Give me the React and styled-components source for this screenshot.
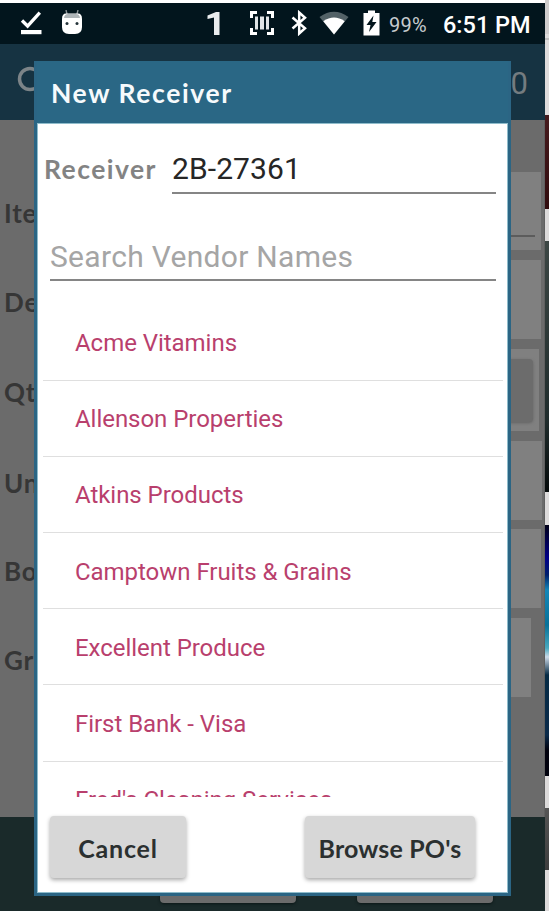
import React, { useState } from "react";
import styled, { createGlobalStyle } from "styled-components";

const vendors = [
  "Acme Vitamins",
  "Allenson Properties",
  "Atkins Products",
  "Camptown Fruits & Grains",
  "Excellent Produce",
  "First Bank - Visa",
  "Fred's Cleaning Services"
];

const fields = [
  { label: "Item", height: 78, gap: 10, right: 3, line: true },
  { label: "Desc", height: 79, gap: 10, right: 3 },
  { label: "Qty", height: 82, gap: 10, right: 5, button: true },
  { label: "Unit", height: 79, gap: 9, right: 2 },
  { label: "Box", height: 79, gap: 10, right: 3 },
  { label: "Group", height: 79, gap: 0, right: 13 }
];

const StatusIcons = () => (
  <StatusBar>
    <Icon width="22" height="26" viewBox="0 0 22 26" $left={20}>
      <path d="M2 10.5 L7.6 16 L19.8 2.6" fill="none" stroke="#fff" strokeWidth="3.3" />
      <path d="M1 20h20.5v4.2H1z" fill="#fff" />
    </Icon>
    <Icon width="22" height="26" viewBox="0 0 22 26" $left={18.5}>
      <path d="M5 0l1.200 5M17 0l-1.200 5" stroke="#8b9497" strokeWidth="1.4" />
      <path d="M1 9Q1 3.500 5 3.500h12q4 0 4 5.500v8q0 7-7 7h-6Q1 24 1 17z" fill="#fff" />
      <path d="M3 8Q3.400 4 7 4h8q3.600 0 4 4z" fill="#aeb5b8" />
      <circle cx="6" cy="13.500" r="1.500" fill="#26343a" />
      <circle cx="16" cy="13.500" r="1.500" fill="#26343a" />
    </Icon>
    <Icon width="16" height="25" viewBox="0 0 16 25" $left={123}>
      <path d="M8 24V6.500L1.500 8V4.500L10 1h3.500v23z" fill="#e9ecee" />
    </Icon>
    <Icon width="26" height="26" viewBox="0 0 26 26" $left={27.5}>
      <path
        d="M2.500 8V2.500H8M18 2.500h5.500V8M23.500 18v5.500H18M8 23.500H2.500V18"
        fill="none"
        stroke="#fff"
        strokeWidth="3"
      />
      <path d="M6 6.500h3v13H6zM11 6.500h4v13h-4zM17 6.500h3v13h-3z" fill="#e1e5e7" />
    </Icon>
    <Icon width="17" height="26" viewBox="0 0 17 26" $left={16}>
      <path
        d="M1.500 7.500L14 18.300L8.200 23.500V2.500L14 7.700L1.500 18.500"
        fill="none"
        stroke="#fff"
        strokeWidth="2.500"
      />
    </Icon>
    <Icon width="30" height="24" viewBox="0 0 30 24" $left={10.5}>
      <path d="M0.500 6Q15-4.500 29.500 6L15 23.500z" fill="#536267" />
      <path d="M4.300 10.300Q15 2.800 25.700 10.300L15 23.500z" fill="#fff" />
    </Icon>
    <Icon width="17" height="26" viewBox="0 0 17 26" $left={14.5}>
      <path d="M.5 3H5V.5h7V3h4.500v22.500H.5z" fill="#fff" />
      <path d="M10.500 5.500L3.500 15h4L6 22l7.500-10h-4.200z" fill="#03151c" />
    </Icon>
    <Percent>99%</Percent>
    <Clock>6:51 PM</Clock>
  </StatusBar>
);

const App = () => {
  const [receiver, setReceiver] = useState("2B-27361");
  const [search, setSearch] = useState("");

  return (
    <Page>
      <GlobalStyle />
      <Screen>
        <StatusIcons />
        <AppBar>
          <Ring width="30" height="30" viewBox="0 0 30 30">
            <circle cx="13" cy="13" r="10.500" fill="none" stroke="#7c8488" strokeWidth="3.500" />
          </Ring>
          <Count>0</Count>
        </AppBar>
        <Form>
          {fields.map((field) => (
            <Field key={field.label} $height={field.height} $gap={field.gap}>
              <FieldLabel>{field.label}</FieldLabel>
              <FieldBox $right={field.right}>
                {field.line && <FieldLine />}
                {field.button && <FieldButton />}
              </FieldBox>
            </Field>
          ))}
        </Form>
        <Footer>
          <FooterButton />
          <FooterButton />
        </Footer>
      </Screen>
      <Edge />

      <Dialog>
        <Title>New Receiver</Title>
        <Body>
          <ReceiverRow>
            <Label>Receiver</Label>
            <ReceiverInput value={receiver} onChange={(e) => setReceiver(e.target.value)} />
          </ReceiverRow>
          <SearchInput
            placeholder="Search Vendor Names"
            value={search}
            onChange={(e) => setSearch(e.target.value)}
          />
          <List>
            {vendors
              .filter((name) => name.toLowerCase().includes(search.toLowerCase()))
              .map((name) => (
                <Vendor key={name}>{name}</Vendor>
              ))}
          </List>
          <Actions>
            <Button $width={136} $spacing={0.8}>Cancel</Button>
            <Button $width={170} $spacing={0.15}>Browse PO's</Button>
          </Actions>
        </Body>
      </Dialog>
    </Page>
  );
};

export default App;

const GlobalStyle = createGlobalStyle`
  * {
    box-sizing: border-box;
  }

  body {
    margin: 0;
    background: #fff;
    overflow: hidden;
  }
`;

const Page = styled.div`
  position: relative;
  display: flex;
  width: 549px;
  height: 911px;
  overflow: hidden;
  font-family: Roboto, "Liberation Sans", sans-serif;
`;

const Screen = styled.div`
  display: flex;
  flex-direction: column;
  width: 545px;
  padding-top: 3px;
`;

const StatusBar = styled.div`
  display: flex;
  align-items: center;
  height: 41px;
  padding-bottom: 1px;
  background-color: #02151d;
  color: #fff;
`;

const Icon = styled.svg`
  flex-shrink: 0;
  margin-left: ${({ $left }) => $left}px;
`;

const Percent = styled.span`
  margin: 3px 0 0 9px;
  width: 39px;
  font-size: 20px;
  letter-spacing: 0.2px;
  color: #c6cbce;
`;

const Clock = styled.span`
  margin: 3px 0 0 15px;
  font-size: 23.5px;
  font-weight: 500;
  white-space: nowrap;
`;

const AppBar = styled.div`
  display: flex;
  justify-content: space-between;
  align-items: center;
  height: 76px;
  padding: 0 17px 0 17px;
  background-color: #163342;
`;

const Ring = styled.svg`
  margin-bottom: 2px;
`;

const Count = styled.span`
  margin-top: 3px;
  font-size: 31px;
  color: #747c80;
`;

const Form = styled.div`
  height: 697px;
  padding-top: 52px;
  background-color: #6b6b6b;
  border-right: 1px solid #606060;
`;

const Field = styled.div`
  display: flex;
  height: ${({ $height }) => $height}px;
  margin-bottom: ${({ $gap }) => $gap}px;
`;

const FieldLabel = styled.div`
  display: flex;
  align-items: center;
  width: 120px;
  padding: 4px 0 0 4px;
  font-family: Lato, sans-serif;
  font-size: 26px;
  font-weight: bold;
  letter-spacing: 0.8px;
  color: #363636;
`;

const FieldBox = styled.div`
  flex: 1;
  margin-right: ${({ $right }) => $right}px;
  padding: 10px 6px;
  background-color: #808080;
`;

const FieldLine = styled.div`
  height: 55px;
  border-bottom: 2px solid #5c5c5c;
`;

const FieldButton = styled.div`
  height: 63px;
  border-radius: 4px;
  background-color: #6c6c6c;
  box-shadow: 0 1px 3px #626262;
`;

const Footer = styled.div`
  flex: 1;
  display: flex;
  align-items: flex-end;
  gap: 61px;
  padding: 0 0 8px 160px;
  background-color: #1a2a2a;
`;

const FooterButton = styled.div`
  width: 136px;
  height: 63px;
  border-radius: 4px;
  background-color: #6b6b6b;
  box-shadow: 0 1px 3px #0b1616;
`;

const Edge = styled.div`
  width: 4px;
  background: linear-gradient(
    #cfcdcd 0 34px,
    #dedcdc 34px 38px,
    #bdbdbd 38px 40px,
    #dedcdc 40px 115px,
    #461b1e 115px,
    #310c0e 209px,
    #dcdada 209px 241px,
    #3c4644 241px,
    #202c2c 420px,
    #050a0a 492px,
    #dcdada 492px 525px,
    #000018 525px,
    #000088 558px,
    #00206c 575px,
    #1587b8 590px,
    #087299 625px,
    #48a8bd 648px,
    #cddae8 657px,
    #062b44 675px,
    #0b2b4a 735px,
    #02020e 750px 776px,
    #dcdada 776px 808px,
    #555 808px,
    #3e3e3e 870px,
    #dcdada 870px 911px
  );
`;

const Dialog = styled.div`
  position: absolute;
  top: 61px;
  left: 34px;
  display: flex;
  flex-direction: column;
  width: 477px;
  height: 835px;
  border: 3px solid #2b6584;
  border-top: 0;
  background-color: #fff;
`;

const Title = styled.div`
  display: flex;
  align-items: center;
  height: 62px;
  padding: 1px 0 0 14px;
  background-color: #2a6785;
  font-family: Lato, sans-serif;
  font-size: 26.5px;
  font-weight: bold;
  letter-spacing: 1.6px;
  color: #f6fafc;
`;

const Body = styled.div`
  flex: 1;
  display: flex;
  flex-direction: column;
  min-height: 0;
  border: 1px solid #8fbccb;
  padding: 0 4px 0 5px;
`;

const ReceiverRow = styled.div`
  display: flex;
  align-items: flex-end;
  height: 70px;
  padding-right: 7px;
`;

const Label = styled.label`
  width: 129px;
  padding: 0 0 9px 1px;
  font-family: Lato, sans-serif;
  font-size: 26.5px;
  font-weight: bold;
  letter-spacing: 1.45px;
  color: #838383;
`;

const Input = styled.input`
  min-width: 0;
  padding: 0;
  border: 0;
  border-bottom: 2px solid #858585;
  border-radius: 0;
  outline: none;
  background: transparent;
  font-family: Roboto, sans-serif;
  font-size: 30px;
  color: #262626;

  &::placeholder {
    color: #a5a5a5;
    opacity: 1;
  }
`;

const ReceiverInput = styled(Input)`
  flex: 1;
  height: 50px;
  letter-spacing: 0.1px;
`;

const SearchInput = styled(Input)`
  height: 50px;
  margin: 37px 7px 0;
  padding-top: 2px;
  flex-shrink: 0;
  letter-spacing: 0.3px;
`;

const List = styled.div`
  height: 493px;
  margin-top: 23px;
  padding-top: 0.5px;
  overflow: hidden;
`;

const Vendor = styled.div`
  display: flex;
  align-items: center;
  height: 76.2px;
  padding: 2px 0 0 32px;
  border-bottom: 1px solid #dfdfdf;
  font-size: 24px;
  letter-spacing: -0.04px;
  color: #b93f6d;
`;

const Actions = styled.div`
  display: flex;
  justify-content: space-between;
  padding: 19px 28px 0 7px;
`;

const Button = styled.button`
  width: ${({ $width }) => $width}px;
  height: 62px;
  padding: 2px 0 0;
  border: 0;
  border-radius: 4px;
  background-color: #d7d7d7;
  box-shadow: 0 2px 4px rgba(0, 0, 0, 0.35);
  font-family: Lato, sans-serif;
  font-size: 25px;
  font-weight: bold;
  letter-spacing: ${({ $spacing }) => $spacing}px;
  color: #2b3030;
  white-space: nowrap;
`;
